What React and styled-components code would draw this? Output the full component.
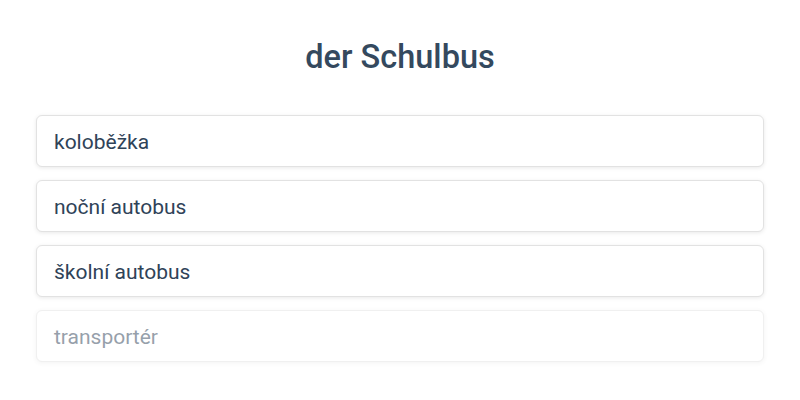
import styled, { createGlobalStyle } from 'styled-components';

const GlobalStyle = createGlobalStyle`
  body {
    margin: 0;
    background: #ffffff;
    font-family: Roboto, 'Noto Sans', sans-serif;
  }
`;

const options = [
  { label: 'koloběžka' },
  { label: 'noční autobus' },
  { label: 'školní autobus' },
  { label: 'transportér', faded: true },
];

const App = () => {
  return (
    <>
      <GlobalStyle />
      <StyledPage>
        <StyledTitle>der Schulbus</StyledTitle>
        <StyledList>
          {options.map((option, index) => (
            <StyledOption key={index} faded={option.faded ? 1 : 0}>
              {option.label}
            </StyledOption>
          ))}
        </StyledList>
      </StyledPage>
    </>
  );
};

const StyledPage = styled.div`
  width: 800px;
  height: 400px;
  box-sizing: border-box;
  padding: 37px 36px 0;
  display: flex;
  flex-direction: column;
  align-items: stretch;
`;

const StyledTitle = styled.h1`
  margin: 0;
  text-align: center;
  font-size: 32.5px;
  line-height: 40px;
  font-weight: 500;
  color: #34495e;
`;

const StyledList = styled.div`
  margin-top: 38px;
  display: flex;
  flex-direction: column;
  gap: 13px;
`;

const StyledOption = styled.div`
  height: 52px;
  box-sizing: border-box;
  display: flex;
  align-items: center;
  padding: 1px 17px 0;
  border: 1px solid #e2e2e2;
  border-radius: 6px;
  background: #ffffff;
  box-shadow: 0 1px 4px rgba(0, 0, 0, 0.09);
  font-size: 21px;
  color: #2f4358;
  opacity: ${({ faded }) => (faded ? 0.5 : 1)};
`;

export default App;
